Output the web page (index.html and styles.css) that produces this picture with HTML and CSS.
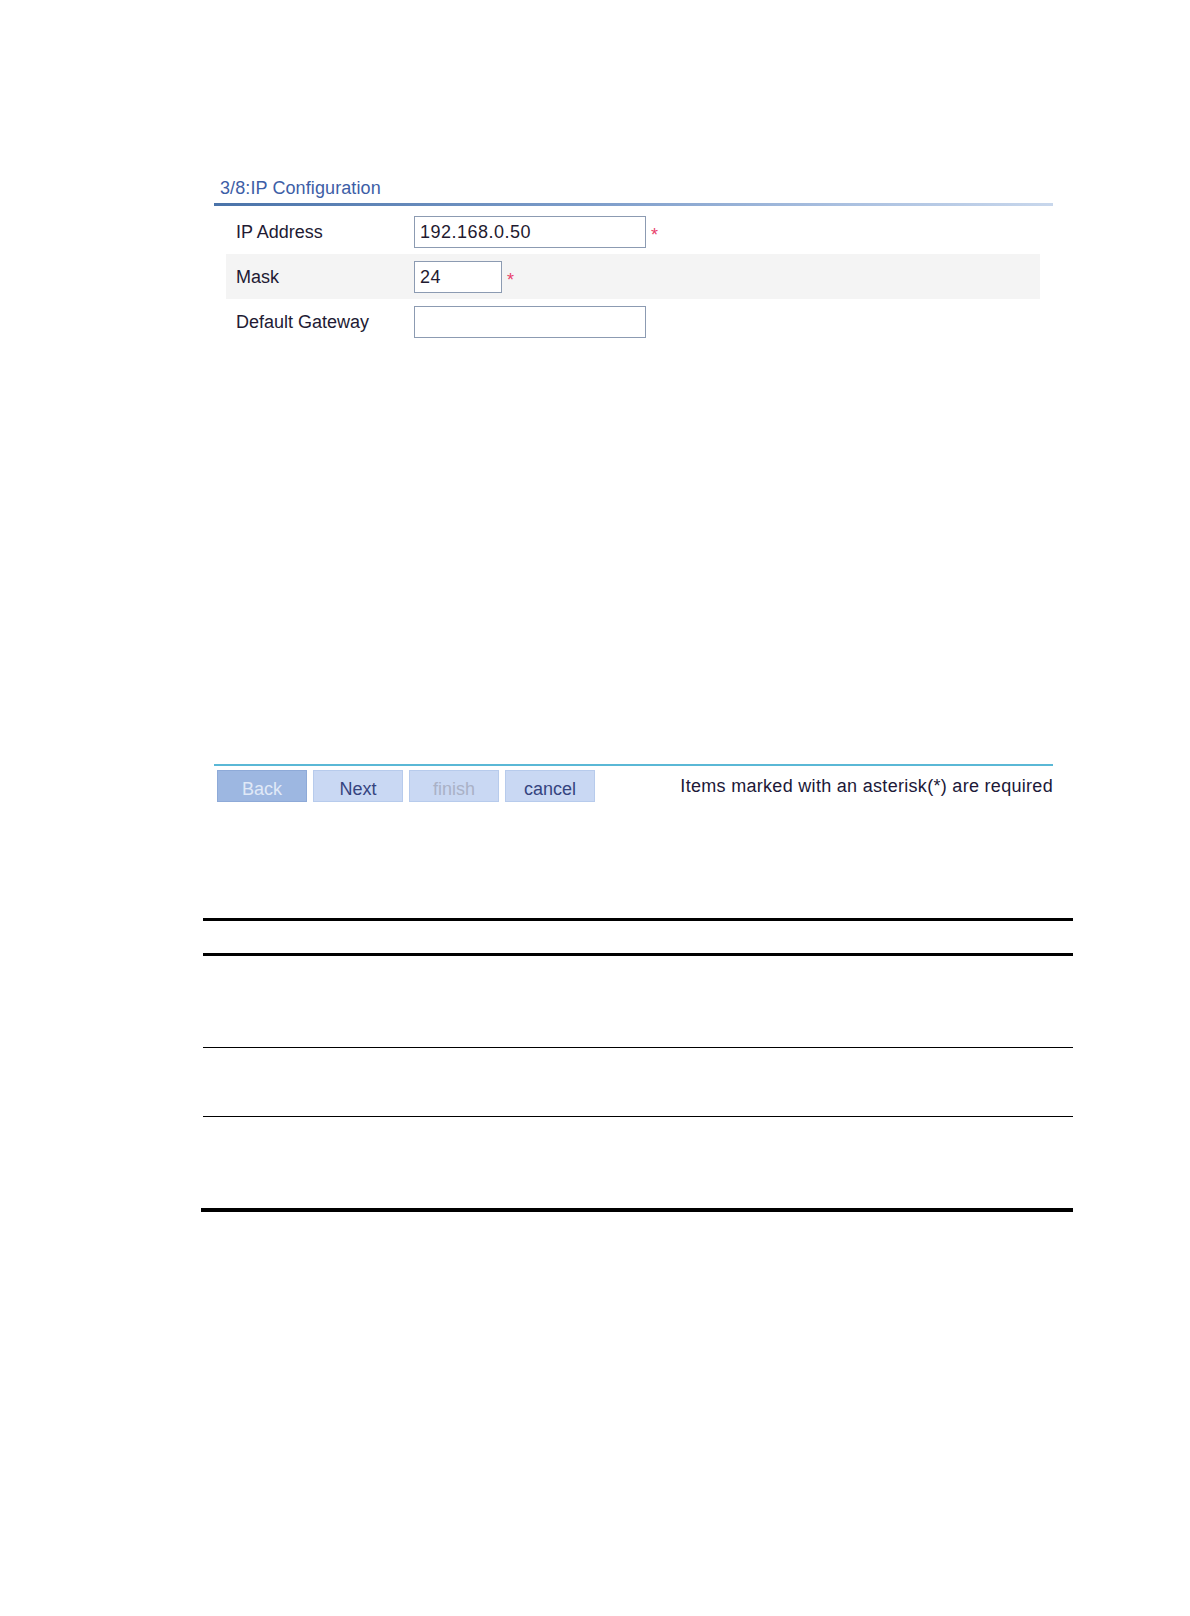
FILE: index.html
```html
<!DOCTYPE html>
<html lang="en">
<head>
<meta charset="utf-8">
<title>IP Configuration</title>
<link rel="stylesheet" href="styles.css">
</head>
<body>
<div class="page">
  <section class="wizard">
    <h2 class="wizard-title">3/8:IP Configuration</h2>
    <div class="title-rule"></div>
    <div class="form">
      <div class="form-row">
        <label class="form-label">IP Address</label>
        <input class="field field-wide" type="text" value="192.168.0.50">
        <span class="req">*</span>
      </div>
      <div class="form-row form-row-alt">
        <label class="form-label">Mask</label>
        <input class="field field-short" type="text" value="24">
        <span class="req">*</span>
      </div>
      <div class="form-row">
        <label class="form-label">Default Gateway</label>
        <input class="field field-wide" type="text" value="">
      </div>
    </div>
    <div class="footer-rule"></div>
    <div class="footer-bar">
      <div class="buttons">
        <button class="btn btn-active" type="button">Back</button>
        <button class="btn" type="button">Next</button>
        <button class="btn btn-disabled" type="button">finish</button>
        <button class="btn" type="button">cancel</button>
      </div>
      <p class="note">Items marked with an asterisk(*) are required</p>
    </div>
  </section>

  <div class="doc-table">
    <div class="doc-head"></div>
    <div class="doc-row doc-row-tall"></div>
    <div class="doc-row doc-row-short"></div>
    <div class="doc-row doc-row-tall doc-row-last"></div>
  </div>
  <div class="doc-table-end"></div>
</div>
</body>
</html>
```

FILE: styles.css
```css
html, body {
  margin: 0;
  padding: 0;
  background: #ffffff;
}

body {
  font-family: "Liberation Sans", Arial, sans-serif;
  font-size: 18px;
  line-height: 20px;
  color: #221a33;
}

.page {
  padding-top: 178px;
  padding-bottom: 40px;
}

.wizard {
  margin-left: 214px;
  width: 839px;
}

.wizard-title {
  margin: 0 0 5px 6px;
  font-size: 18px;
  line-height: 20px;
  font-weight: normal;
  color: #3d5ea6;
  letter-spacing: 0.1px;
}

.title-rule {
  height: 3px;
  background: linear-gradient(to right, #4a73a9 0%, #7d9dca 45%, #aac0e0 75%, #c8d7ec 100%);
}

.form {
  margin: 3px 0 0 12px;
  width: 814px;
}

.form-row {
  display: flex;
  align-items: center;
  height: 45px;
}

.form-row-alt {
  background: #f4f4f4;
}

.form-label {
  width: 178px;
  padding-left: 10px;
  flex: none;
}

.field {
  box-sizing: border-box;
  height: 32px;
  margin: 0;
  padding: 2px 3px 0 5px;
  border: 1px solid #8c9bb2;
  border-radius: 0;
  background: #ffffff;
  font-family: "Liberation Sans", Arial, sans-serif;
  font-size: 18px;
  line-height: 20px;
  letter-spacing: 0.5px;
  color: #1f1a30;
  outline: none;
}

.field-wide {
  width: 232px;
}

.field-short {
  width: 88px;
}

.req {
  align-self: flex-start;
  margin: 17px 0 0 5px;
  font-size: 18px;
  line-height: 18px;
  color: #e8416b;
}

.footer-rule {
  margin-top: 420px;
  height: 2px;
  background: #5ab8d6;
}

.footer-bar {
  display: flex;
  justify-content: space-between;
  align-items: flex-start;
  padding-top: 4px;
}

.buttons {
  display: flex;
  gap: 6px;
  margin-left: 3px;
}

.btn {
  box-sizing: border-box;
  width: 90px;
  height: 32px;
  margin: 0;
  padding: 8px 0 2px;
  border: 1px solid #b7cbec;
  border-radius: 0;
  background: #c9d8f3;
  font-family: "Liberation Sans", Arial, sans-serif;
  font-size: 18px;
  line-height: 20px;
  color: #35447f;
  text-align: center;
  cursor: pointer;
}

.btn-active {
  background: #9db7e1;
  border-color: #8eaad8;
  color: #e0e9f7;
}

.btn-disabled {
  color: #a9b1c6;
}

.note {
  margin: 6px 0 0 0;
  font-size: 18px;
  line-height: 20px;
  letter-spacing: 0.3px;
  color: #201838;
}

.doc-table {
  margin: 116px 0 0 203px;
  width: 870px;
}

.doc-head {
  height: 32px;
  border-top: 3px solid #000000;
  border-bottom: 3px solid #000000;
}

.doc-row {
  border-bottom: 1px solid #000000;
}

.doc-row-tall {
  height: 91px;
}

.doc-row-short {
  height: 68px;
}

.doc-row-last {
  border-bottom: none;
}

.doc-table-end {
  margin-left: 201px;
  width: 872px;
  height: 4px;
  background: #000000;
}
```
